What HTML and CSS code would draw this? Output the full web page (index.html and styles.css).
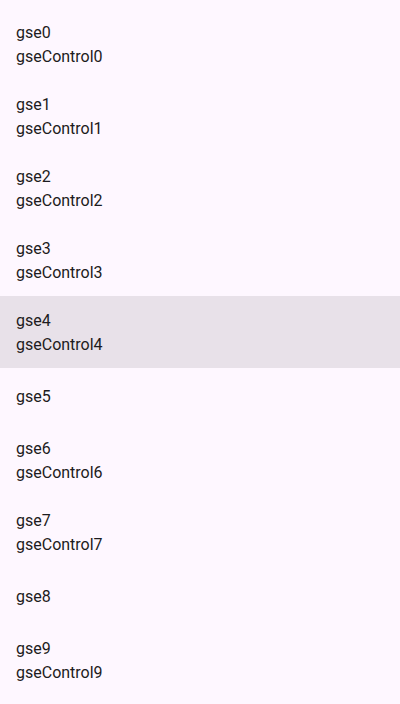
FILE: index.html
```html
<!DOCTYPE html>
<html>
<head>
<meta charset="utf-8">
<link rel="stylesheet" href="styles.css">
</head>
<body>
<ul class="list">
  <li class="item"><span class="line">gse0</span><span class="line">gseControl0</span></li>
  <li class="item"><span class="line">gse1</span><span class="line">gseControl1</span></li>
  <li class="item"><span class="line">gse2</span><span class="line">gseControl2</span></li>
  <li class="item"><span class="line">gse3</span><span class="line">gseControl3</span></li>
  <li class="item selected"><span class="line">gse4</span><span class="line">gseControl4</span></li>
  <li class="item single"><span class="line">gse5</span></li>
  <li class="item"><span class="line">gse6</span><span class="line">gseControl6</span></li>
  <li class="item"><span class="line">gse7</span><span class="line">gseControl7</span></li>
  <li class="item single"><span class="line">gse8</span></li>
  <li class="item"><span class="line">gse9</span><span class="line">gseControl9</span></li>
</ul>
</body>
</html>
```
FILE: styles.css
```css
html, body {
  margin: 0;
  padding: 0;
  background: #fef7ff;
  height: 100%;
  overflow: hidden;
}
body {
  font-family: Roboto, "Noto Sans", sans-serif;
  font-size: 16px;
  color: #1d1b20;
}
.list {
  list-style: none;
  margin: 0;
  padding: 8px 0;
}
.item {
  display: flex;
  flex-direction: column;
  justify-content: center;
  height: 72px;
  box-sizing: border-box;
  padding: 2px 16px 0;
}
.item.single {
  height: 56px;
}
.item.selected {
  background: #e8e1e9;
}
.line {
  line-height: 24px;
}
```
